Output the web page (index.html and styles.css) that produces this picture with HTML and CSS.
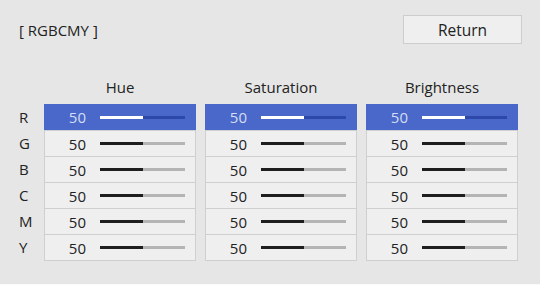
FILE: index.html
```html
<!DOCTYPE html>
<html>
<head>
<meta charset="utf-8">
<link rel="stylesheet" href="styles.css">
</head>
<body>
<div class="screen">
  <div class="top">
    <div class="title">[ RGBCMY ]</div>
    <div class="btn">Return</div>
  </div>
  <div class="table">
    <div class="labels">
      <div class="hdr"></div>
      <div class="lbl">R</div>
      <div class="lbl">G</div>
      <div class="lbl">B</div>
      <div class="lbl">C</div>
      <div class="lbl">M</div>
      <div class="lbl">Y</div>
    </div>
    <div class="col">
      <div class="hdr">Hue</div>
      <div class="box">
        <div class="cell sel"><span class="num">50</span><span class="track"><span class="fill"></span></span></div>
        <div class="cell"><span class="num">50</span><span class="track"><span class="fill"></span></span></div>
        <div class="cell"><span class="num">50</span><span class="track"><span class="fill"></span></span></div>
        <div class="cell"><span class="num">50</span><span class="track"><span class="fill"></span></span></div>
        <div class="cell"><span class="num">50</span><span class="track"><span class="fill"></span></span></div>
        <div class="cell"><span class="num">50</span><span class="track"><span class="fill"></span></span></div>
      </div>
    </div>
    <div class="col">
      <div class="hdr">Saturation</div>
      <div class="box">
        <div class="cell sel"><span class="num">50</span><span class="track"><span class="fill"></span></span></div>
        <div class="cell"><span class="num">50</span><span class="track"><span class="fill"></span></span></div>
        <div class="cell"><span class="num">50</span><span class="track"><span class="fill"></span></span></div>
        <div class="cell"><span class="num">50</span><span class="track"><span class="fill"></span></span></div>
        <div class="cell"><span class="num">50</span><span class="track"><span class="fill"></span></span></div>
        <div class="cell"><span class="num">50</span><span class="track"><span class="fill"></span></span></div>
      </div>
    </div>
    <div class="col">
      <div class="hdr">Brightness</div>
      <div class="box">
        <div class="cell sel"><span class="num">50</span><span class="track"><span class="fill"></span></span></div>
        <div class="cell"><span class="num">50</span><span class="track"><span class="fill"></span></span></div>
        <div class="cell"><span class="num">50</span><span class="track"><span class="fill"></span></span></div>
        <div class="cell"><span class="num">50</span><span class="track"><span class="fill"></span></span></div>
        <div class="cell"><span class="num">50</span><span class="track"><span class="fill"></span></span></div>
        <div class="cell"><span class="num">50</span><span class="track"><span class="fill"></span></span></div>
      </div>
    </div>
  </div>
</div>
</body>
</html>
```
FILE: styles.css
```css
html, body {
  margin: 0;
  padding: 0;
}
body {
  background: #e6e6e6;
  height: 285px;
  box-sizing: border-box;
  border-bottom: 1px solid #fbfbfb;
  font-family: "Open Sans", "Noto Sans", sans-serif;
  font-size: 15px;
  color: #222;
  overflow: hidden;
}
.screen {
  padding: 15px 18px 0 19px;
}
.top {
  display: flex;
  justify-content: space-between;
  align-items: center;
  height: 29px;
}
.title {
  font-size: 15px;
}
.btn {
  width: 117px;
  height: 27px;
  border: 1px solid #cdcdcd;
  background: #efefef;
  display: flex;
  align-items: center;
  justify-content: center;
  font-size: 15.5px;
}
.table {
  display: flex;
  margin-top: 33px;
}
.labels {
  width: 25px;
}
.hdr {
  height: 20px;
  line-height: 20px;
  margin-bottom: 7px;
  text-align: center;
  font-size: 15px;
}
.lbl {
  height: 26px;
  line-height: 26px;
  font-size: 15px;
}
.col {
  width: 152px;
}
.col + .col {
  margin-left: 9px;
}
.box {
  border: 1px solid #cfcfcf;
  background: #efefef;
}
.cell {
  height: 25px;
  display: flex;
  align-items: center;
  border-top: 1px solid #cfcfcf;
}
.cell:first-child {
  border-top: none;
}
.cell.sel {
  background: #4a68c9;
  margin: -1px -1px 0 -1px;
  height: 26px;
  padding: 0 1px;
}
.num {
  width: 41px;
  text-align: right;
  font-size: 15px;
}
.sel .num {
  color: #d4ddf4;
}
.track {
  margin-left: 14px;
  width: 85px;
  height: 3px;
  background: #b4b4b4;
  display: flex;
}
.fill {
  width: 43px;
  height: 3px;
  background: #1e1e1e;
}
.sel .track {
  background: #2c48a8;
}
.sel .fill {
  background: #ffffff;
}
```
